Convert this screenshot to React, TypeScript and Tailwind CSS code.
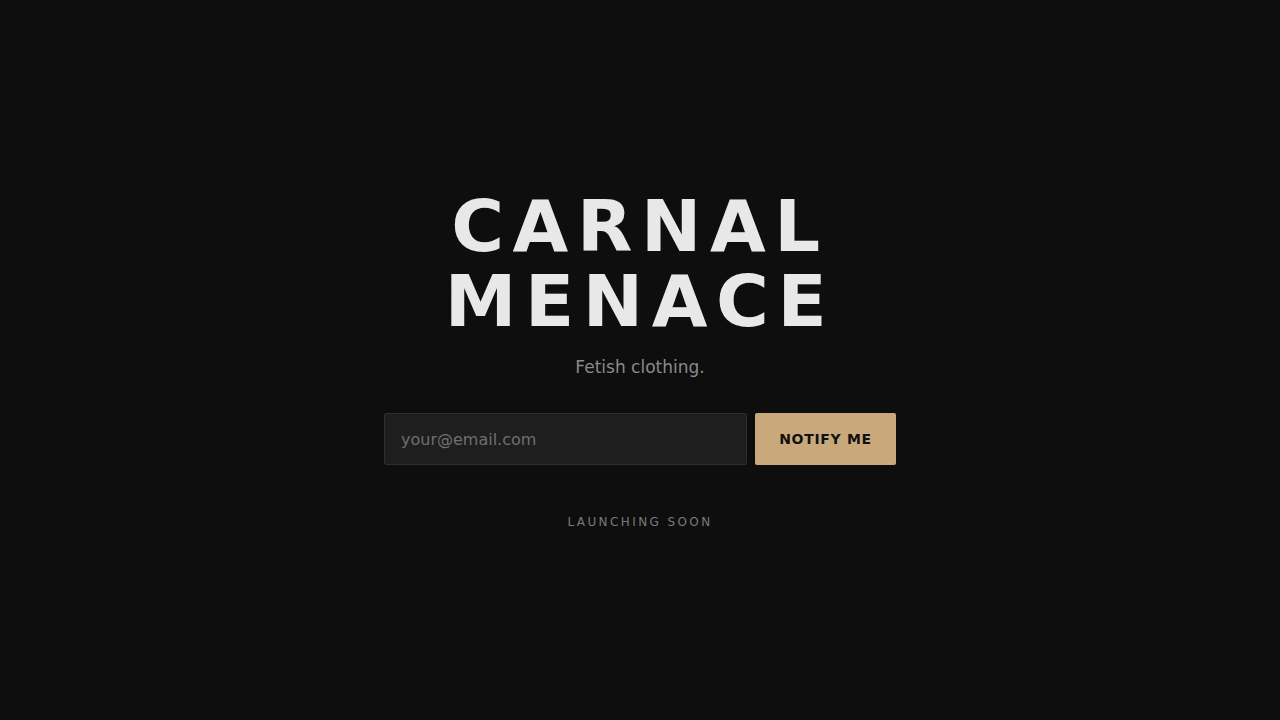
export default function App() {
  return (
    <div
      className="min-h-screen w-full bg-[#0e0e0e] flex flex-col items-center justify-center text-center"
      style={{ fontFamily: '"DejaVu Sans", sans-serif' }}
    >
      <h1 className="text-[72px] leading-[1.05] font-bold tracking-[0.12em] text-[#e8e8e8] uppercase">
        Carnal
        <br />
        Menace
      </h1>
      <p className="mt-[15px] text-[17px] text-[#8a8a8a]">Fetish clothing.</p>

      <form className="mt-[33px] flex gap-2 w-[512px]" onSubmit={(e) => e.preventDefault()}>
        <input
          type="email"
          placeholder="your@email.com"
          className="flex-1 h-[52px] px-4 bg-[#1e1e1e] border border-[#2e2e2e] rounded-[2px] text-[16px] text-[#e8e8e8] placeholder:text-[#6f6f6f] focus:outline-none"
        />
        <button
          type="submit"
          className="h-[52px] w-[141px] bg-[#c9a97c] rounded-[2px] text-[14px] font-bold tracking-[0.05em] text-[#111]"
        >
          NOTIFY ME
        </button>
      </form>

      <p className="mt-[48px] text-[12px] tracking-[0.2em] text-[#7a7a7a]">LAUNCHING SOON</p>
    </div>
  )
}
